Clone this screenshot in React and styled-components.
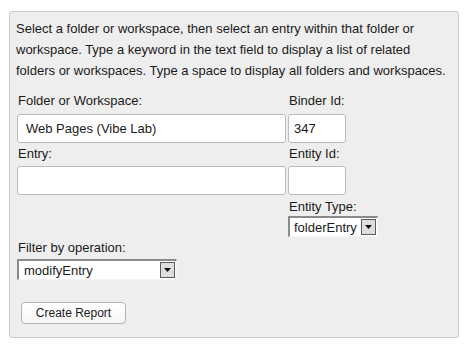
import React from "react";
import styled, { createGlobalStyle } from "styled-components";

const GlobalStyle = createGlobalStyle`
  html, body {
    margin: 0;
    padding: 0;
    background: #ffffff;
  }
  body {
    font-family: "Liberation Sans", Arial, sans-serif;
    color: #1a1a1a;
  }
`;

const Page = styled.div`
  padding: 11px 9px;
`;

const Panel = styled.div`
  box-sizing: border-box;
  width: 450px;
  height: 327px;
  background: #eeeeee;
  border: 1px solid #c9c9c9;
  border-radius: 3px;
  padding: 6px 6px 15px 6px;
`;

const Intro = styled.p`
  margin: 0;
  font-size: 13px;
  line-height: 21px;
`;

const Form = styled.div`
  margin-top: 12px;
  padding-left: 1px;
`;

const FieldGrid = styled.div`
  display: grid;
  grid-template-columns: 269px auto;
  column-gap: 2px;
  align-items: start;
`;

const Label = styled.label`
  display: block;
  font-size: 13px;
  line-height: 16px;
  padding-left: 1px;
  margin-top: ${(p) => p.$top || 0}px;
  margin-bottom: ${(p) => p.$bottom || 0}px;
`;

const TextBox = styled.div`
  box-sizing: border-box;
  width: ${(p) => p.$width}px;
  height: 29px;
  background: #ffffff;
  border: 1px solid #bcbcbc;
  border-radius: 3px;
  padding: 0 ${(p) => p.$pad || 5}px;
  font-size: 13px;
  line-height: 27px;
  margin-bottom: 3px;
`;

const Select = styled.div`
  box-sizing: border-box;
  display: flex;
  align-items: center;
  justify-content: space-between;
  width: ${(p) => p.$width}px;
  height: 21px;
  background: #ffffff;
  border-top: 2px solid #8a8a8a;
  border-left: 2px solid #8a8a8a;
  border-right: 1px solid #f4f4f4;
  border-bottom: 1px solid #f4f4f4;
  padding-left: ${(p) => p.$pad || 4}px;
  padding-right: 1px;
  font-size: 13px;
  margin-bottom: ${(p) => p.$bottom || 0}px;
`;

const DropButton = styled.span`
  box-sizing: border-box;
  display: flex;
  align-items: center;
  justify-content: center;
  width: 15px;
  height: 16px;
  background: #dedede;
  border: 1px solid #5c5c5c;
`;

const Button = styled.button`
  box-sizing: border-box;
  margin: 22px 0 0 4px;
  width: 105px;
  height: 22px;
  background: linear-gradient(#ffffff, #f6f6f6);
  border: 1px solid #b4b4b4;
  border-radius: 4px;
  font-family: "Liberation Sans", Arial, sans-serif;
  font-size: 12px;
  color: #1a1a1a;
  padding: 0;
`;

function Arrow() {
  return (
    <svg width="7" height="4" viewBox="0 0 7 4">
      <path d="M0 0 H7 L3.5 4 Z" fill="#111" />
    </svg>
  );
}

function Dropdown({ value, width, pad, bottom }) {
  return (
    <Select $width={width} $pad={pad} $bottom={bottom}>
      <span>{value}</span>
      <DropButton>
        <Arrow />
      </DropButton>
    </Select>
  );
}

export default function App() {
  return (
    <>
      <GlobalStyle />
      <Page>
        <Panel>
          <Intro>
            Select a folder or workspace, then select an entry within that
            folder or workspace. Type a keyword in the text field to display a
            list of related folders or workspaces. Type a space to display all
            folders and workspaces.
          </Intro>
          <Form>
            <FieldGrid>
              <Label $bottom={5}>Folder or Workspace:</Label>
              <Label $bottom={5}>Binder Id:</Label>
              <TextBox $width={269} $pad={8}>Web Pages (Vibe Lab)</TextBox>
              <TextBox $width={58}>347</TextBox>
              <Label $bottom={4}>Entry:</Label>
              <Label $bottom={4}>Entity Id:</Label>
              <TextBox $width={269} />
              <TextBox $width={58} />
              <div />
              <div>
                <Label $top={1} $bottom={1}>Entity Type:</Label>
                <Dropdown value="folderEntry" width={90} bottom={3} />
              </div>
            </FieldGrid>
            <Label $bottom={3}>Filter by operation:</Label>
            <Dropdown value="modifyEntry" width={160} pad={5} />
            <Button>Create Report</Button>
          </Form>
        </Panel>
      </Page>
    </>
  );
}
